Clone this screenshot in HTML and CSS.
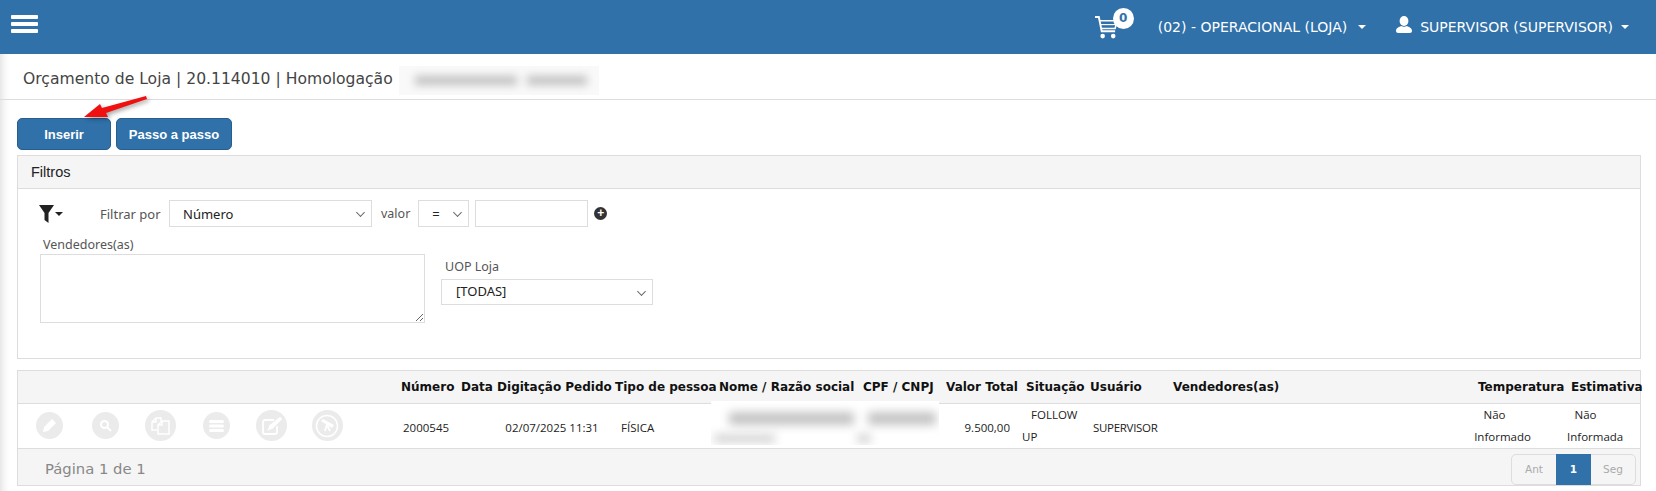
FILE: index.html
```html
<!DOCTYPE html>
<html>
    <head>
        <meta charset="utf-8">
        <link rel="stylesheet" href="styles.css">
        <title>Orçamento de Loja</title>
    </head>
    <body>

<div class="topbar">
    <div class="burger"><span></span><span></span><span></span></div>
    <div class="top-right">
        <div class="cart">
            <svg width="23" height="24" viewBox="0 0 24 25" fill="none" stroke="#fff" stroke-width="2">
                <path d="M0 2h4l3 15h14"/>
                <path d="M5 6h18l-2 8H7" stroke-width="1.6"/>
                <path d="M6 10h16" stroke-width="1.2"/>
                <circle cx="8" cy="22" r="2.4" fill="#fff" stroke="none"/>
                <circle cx="19" cy="22" r="2.4" fill="#fff" stroke="none"/>
            </svg>
            <span class="badge">0</span>
        </div>
        <a class="menu menu-loja"><span>(02) - OPERACIONAL (LOJA)</span><i class="caret"></i></a>
        <a class="menu">
            <svg width="16" height="17" viewBox="0 0 16 17" fill="#fff">
                <ellipse cx="8" cy="5" rx="4.4" ry="5"/>
                <path d="M0 15c0-3 3-4 5-5 2 1 4 1 6 0 2 1 5 2 5 5 0 1-1 2-2 2H2c-1 0-2-1-2-2z"/>
            </svg>
            <span>SUPERVISOR (SUPERVISOR)</span><i class="caret"></i>
        </a>
    </div>
</div>

<div class="page">
    <div class="title-row">
        <span class="title">Orçamento de Loja | 20.114010 | Homologação</span>
        <span class="blur-box"><span class="smudge s1"></span><span class="smudge s2"></span></span>
    </div>

    <div class="content">
        <div class="actions">
            <button class="btn btn-insert">Inserir</button>
            <button class="btn btn-steps">Passo a passo</button>
            <svg class="arrow" width="70" height="30" viewBox="0 0 70 30">
                <path d="M2 22 L18 9 L20 13 L64 1 L65 4 L24 18 L26 22 Z" fill="#f01010"/>
            </svg>
        </div>

        <div class="panel filters">
            <div class="panel-heading">Filtros</div>
            <div class="panel-body">
                <div class="filter-line">
                    <span class="funnel">
                        <svg width="15" height="18" viewBox="0 0 15 18" fill="#222"><path d="M0 0h15L9.5 8v10l-4-3V8z"/></svg>
                        <i class="caret dark"></i>
                    </span>
                    <label class="lbl-filter">Filtrar por</label>
                    <div class="select sel-num">Número<i class="chev"></i></div>
                    <label class="lbl-valor">valor</label>
                    <div class="select sel-eq">=<i class="chev"></i></div>
                    <div class="input-box"></div>
                    <span class="plus">+</span>
                </div>
                <div class="filter-fields">
                    <div class="field-sellers">
                        <label>Vendedores(as)</label>
                        <textarea class="sellers"></textarea>
                    </div>
                    <div class="field-uop">
                        <label>UOP Loja</label>
                        <div class="select sel-uop">[TODAS]<i class="chev"></i></div>
                    </div>
                </div>
            </div>
        </div>

        <div class="panel results">
            <table>
                <colgroup>
                    <col class="c-icons"><col class="c-num"><col class="c-data"><col class="c-tipo"><col class="c-nome">
                    <col class="c-cpf"><col class="c-valor"><col class="c-sit"><col class="c-user"><col class="c-vend">
                    <col class="c-temp"><col class="c-est">
                </colgroup>
                <thead>
                    <tr>
                        <th></th><th>Número</th><th>Data Digitação Pedido</th><th>Tipo de pessoa</th>
                        <th>Nome / Razão social</th><th>CPF / CNPJ</th><th>Valor Total</th><th>Situação</th>
                        <th>Usuário</th><th>Vendedores(as)</th><th>Temperatura</th><th>Estimativa</th>
                    </tr>
                </thead>
                <tbody>
                    <tr>
                        <td>
                            <div class="row-icons">
                                <span class="ico">
                                    <svg width="15" height="15" viewBox="0 0 15 15" fill="#fff"><path d="M10 1l4 4-8 8-5 1 1-5z"/></svg>
                                </span>
                                <span class="ico">
                                    <svg width="13" height="13" viewBox="0 0 13 13" fill="none" stroke="#fff" stroke-width="2"><circle cx="5.5" cy="5.5" r="3.5"/><path d="M8 8l4 4"/></svg>
                                </span>
                                <span class="ico big">
                                    <svg width="20" height="20" viewBox="0 0 20 20" fill="none" stroke="#fff" stroke-width="1.5"><path d="M1 6l4-4h5v3M5 2v4H1v8h5"/><path d="M7 9l4-4h7v13H7zM11 5v4H7"/></svg>
                                </span>
                                <span class="ico">
                                    <svg width="15" height="12" viewBox="0 0 15 12" fill="#fff"><rect width="15" height="3" rx="1.5"/><rect y="4.5" width="15" height="3" rx="1.5"/><rect y="9" width="15" height="3" rx="1.5"/></svg>
                                </span>
                                <span class="ico big">
                                    <svg width="20" height="18" viewBox="0 0 20 18" fill="none" stroke="#fff" stroke-width="1.8"><path d="M12 3H3a2 2 0 0 0-2 2v10a2 2 0 0 0 2 2h10a2 2 0 0 0 2-2V9"/><path d="M18 1l1 1-9 9-3 1 1-3z" fill="#fff"/></svg>
                                </span>
                                <span class="ico big">
                                    <svg width="24" height="24" viewBox="0 0 24 24" fill="none" stroke="#fff" stroke-width="1.5"><circle cx="12" cy="12" r="10.5"/><path d="M6 7l2-2 11 6-2 3z" fill="#fff" stroke="none"/><path d="M12 10l-2 7M12 11l3 6" stroke-width="1.8"/></svg>
                                </span>
                            </div>
                        </td>
                        <td class="num single">2000545</td>
                        <td class="center date single">02/07/2025 11:31</td>
                        <td class="tipo single">FÍSICA</td>
                        <td class="blurred" colspan="2">
                            <div class="blur-patch">
                                <span class="smudge b1"></span><span class="smudge b2"></span>
                                <span class="smudge b3"></span><span class="smudge b4"></span>
                            </div>
                        </td>
                        <td class="right single">9.500,00</td>
                        <td class="sit"><span>FOLLOW</span><br>UP</td>
                        <td class="user single">SUPERVISOR</td>
                        <td></td>
                        <td class="center temp"><span class="nao">Não</span><br>Informado</td>
                        <td class="center est"><span class="nao">Não</span><br>Informada</td>
                    </tr>
                </tbody>
            </table>
            <div class="results-footer">
                <span class="pageinfo">Página 1 de 1</span>
                <div class="pager">
                    <span class="pg">Ant</span><span class="pg active">1</span><span class="pg">Seg</span>
                </div>
            </div>
        </div>
    </div>
</div>
    </body>
</html>
```

FILE: styles.css
```css
* {
    box-sizing: border-box;
}

html, body {
    height: 491px;
    overflow: hidden;
}

body {
    margin: 0;
    background: #fff;
    font-family: "Open Sans", sans-serif;
    font-size: 13px;
    color: #333;
}

/* top bar */
.topbar {
    height: 54px;
    background: #3071a9;
    display: flex;
    justify-content: space-between;
    align-items: flex-start;
    color: #fff;
}

.burger {
    margin: 15px 0 0 11px;
    width: 27px;
}

.burger span {
    display: block;
    height: 4px;
    background: #fff;
    border-radius: 1px;
    margin-bottom: 3px;
}

.top-right {
    display: flex;
    align-items: center;
    margin-top: 7px;
    padding-right: 27px;
    font-family: "DejaVu Sans", sans-serif;
    font-size: 14px;
}

.cart {
    position: relative;
    width: 39px;
    height: 32px;
    margin-right: 24px;
    padding-top: 8px;
}

.badge {
    position: absolute;
    left: 18px;
    top: 1px;
    width: 21px;
    height: 21px;
    border-radius: 50%;
    background: #fff;
    color: #3071a9;
    font-size: 12px;
    font-weight: bold;
    text-align: center;
    line-height: 20px;
}

.menu {
    display: flex;
    align-items: center;
    white-space: nowrap;
    margin-top: 8px;
}

.menu svg {
    margin: -5px 8px 0 0;
}

.menu-loja {
    margin-right: 30px;
}

.caret {
    display: inline-block;
    width: 0;
    height: 0;
    margin-left: 8px;
    border-top: 4px solid #fff;
    border-left: 4px solid transparent;
    border-right: 4px solid transparent;
}

.menu-loja .caret {
    margin-left: 11px;
}

.caret.dark {
    border-top-color: #222;
    margin-left: 1px;
    border-width: 4px 4px 0;
}

/* page */
.page {
    height: 437px;
    box-shadow: inset 10px 0 8px -8px #ddd;
}

.title-row {
    height: 46px;
    border-bottom: 1px solid #ddd;
    padding: 14px 0 0 23px;
    display: flex;
    align-items: flex-start;
}

.title {
    font-family: "DejaVu Sans", sans-serif;
    font-size: 15.6px;
    line-height: 22px;
    color: #444;
}

.blur-box {
    display: block;
    position: relative;
    width: 200px;
    height: 29px;
    margin: -2px 0 0 6px;
    background: #f9f9f9;
    overflow: hidden;
}

.smudge {
    position: absolute;
    background: #c0c0c0;
    filter: blur(4px);
}

.s1 { left: 16px; top: 10px; width: 102px; height: 9px; }
.s2 { left: 128px; top: 10px; width: 60px; height: 9px; }

.content {
    padding: 18px 15px 0 17px;
}

.actions {
    position: relative;
    display: flex;
    gap: 5px;
    height: 33px;
}

.btn {
    height: 32px;
    padding: 0;
    background: #3071a9;
    border: 1px solid #285e8e;
    border-radius: 5px;
    color: #fff;
    font-family: "Liberation Sans", sans-serif;
    font-weight: bold;
    font-size: 13px;
    white-space: nowrap;
}

.btn-insert {
    width: 94px;
}

.btn-steps {
    width: 116px;
}

.arrow {
    position: absolute;
    left: 65px;
    top: -23px;
    filter: drop-shadow(2px 2px 2px rgba(0, 0, 0, 0.35));
}

.panel {
    border: 1px solid #ddd;
    background: #fff;
}

.filters {
    margin-top: 4px;
    height: 204px;
}

.panel-heading {
    height: 33px;
    padding: 8px 13px;
    background: #f5f5f5;
    border-bottom: 1px solid #ddd;
    font-family: "Liberation Sans", sans-serif;
    font-size: 14.5px;
    color: #222;
}

.panel-body {
    padding: 11px 0 0 22px;
    font-family: "Noto Sans", sans-serif;
    font-size: 12.5px;
    color: #555;
}

.filter-line {
    display: flex;
    align-items: center;
    height: 27px;
}

.funnel {
    display: flex;
    align-items: center;
    width: 61px;
    margin-left: -1px;
}

.lbl-filter {
    width: 69px;
    font-size: 13px;
}

.lbl-valor {
    margin: 0 8px 0 9px;
}

.select {
    position: relative;
    height: 27px;
    border: 1px solid #ddd;
    background: #fff;
    color: #222;
    line-height: 26px;
    font-size: 13px;
}

.sel-num { width: 203px; padding-left: 13px; }
.sel-eq { width: 51px; padding-left: 13px; }
.sel-uop { width: 212px; padding-left: 14px; height: 26px; margin-top: 3px; line-height: 22px; }

.chev {
    position: absolute;
    right: 7px;
    top: 8px;
    width: 7px;
    height: 7px;
    border-right: 1px solid #666;
    border-bottom: 1px solid #666;
    transform: rotate(45deg) scale(0.9);
}

.input-box {
    width: 113px;
    height: 27px;
    margin-left: 6px;
    border: 1px solid #ddd;
}

.plus {
    width: 13px;
    height: 13px;
    margin-left: 6px;
    border-radius: 50%;
    background: #333;
    color: #fff;
    font: bold 12px/13px "Liberation Sans", sans-serif;
    text-align: center;
}

.filter-fields {
    display: flex;
    align-items: flex-start;
}

.field-sellers {
    width: 401px;
    margin-top: 9px;
}

.field-sellers label {
    display: block;
    line-height: 17px;
    margin-left: 3px;
}

.sellers {
    display: block;
    width: 385px;
    height: 69px;
    margin-top: 1px;
    border: 1px solid #ddd;
    outline: none;
}

.field-uop {
    margin: 31px 0 0 0;
}

.field-uop label {
    display: block;
    line-height: 18px;
    margin-left: 4px;
}

.results {
    margin-top: 11px;
    height: 116px;
    background: #f5f5f5;
}

table {
    width: 100%;
    table-layout: fixed;
    border-collapse: collapse;
    background: #fff;
}

.c-icons { width: 379px; }
.c-num { width: 60px; }
.c-data { width: 154px; }
.c-tipo { width: 104px; }
.c-nome { width: 144px; }
.c-cpf { width: 83px; }
.c-valor { width: 80px; }
.c-sit { width: 64px; }
.c-user { width: 83px; }
.c-vend { width: 305px; }
.c-temp { width: 93px; }

th {
    height: 32px;
    background: #f5f5f5;
    border-bottom: 1px solid #ddd;
    font-family: "DejaVu Sans", sans-serif;
    font-size: 12px;
    color: #111;
    text-align: left;
    white-space: nowrap;
    padding: 0 0 0 4px;
}

td {
    height: 45px;
    padding: 0;
    border-bottom: 1px solid #ddd;
    font-family: "Open Sans", sans-serif;
    font-size: 11.5px;
    color: #222;
    line-height: 22px;
}

td.single {
    padding-top: 4px;
}

.row-icons {
    display: grid;
    grid-template-columns: repeat(6, 55.5px);
    justify-items: center;
    align-items: center;
    padding-left: 4px;
}

.ico {
    display: flex;
    align-items: center;
    justify-content: center;
    width: 27px;
    height: 27px;
    border-radius: 50%;
    background: #ebebeb;
}

.ico.big {
    width: 31px;
    height: 31px;
}

.num { padding-left: 6px; }
.center { text-align: center; }
.date { padding-left: 36px; }
.right { text-align: right; padding-right: 12px; }
.tipo { padding-left: 10px; }
.sit span { padding-left: 9px; }
.user { padding-left: 7px; letter-spacing: -0.3px; }
.temp { padding-right: 36px; }
.temp .nao { margin-right: 16px; }
.est { padding-right: 28px; }
.est .nao { margin-right: 8px; }

.blurred {
    position: relative;
}

.blur-patch {
    position: absolute;
    left: -4px;
    top: -3px;
    width: 228px;
    height: 44px;
    background: #fff;
    overflow: hidden;
}

.b1 { left: 18px; top: 11px; width: 125px; height: 13px; filter: blur(5px); background: #c4c4c4; }
.b2 { left: 157px; top: 11px; width: 68px; height: 13px; filter: blur(5px); background: #c4c4c4; }
.b3 { left: 3px; top: 33px; width: 61px; height: 9px; filter: blur(5px); background: #d5d5d5; }
.b4 { left: 146px; top: 33px; width: 14px; height: 9px; filter: blur(5px); background: #d5d5d5; }

.results-footer {
    display: flex;
    justify-content: space-between;
    padding: 5px 4px 0 27px;
}

.pageinfo {
    font-family: "DejaVu Sans", sans-serif;
    font-size: 14.8px;
    line-height: 30px;
    color: #888;
}

.pager {
    display: flex;
    height: 31px;
    border: 1px solid #ddd;
    border-radius: 5px;
    font-family: "DejaVu Sans", sans-serif;
    font-size: 10.5px;
    color: #aaa;
}

.pg {
    width: 44px;
    text-align: center;
    line-height: 29px;
}

.pg.active {
    width: 35px;
    margin: -1px 0;
    background: #3071a9;
    color: #fff;
    font-weight: bold;
    line-height: 31px;
}
```
